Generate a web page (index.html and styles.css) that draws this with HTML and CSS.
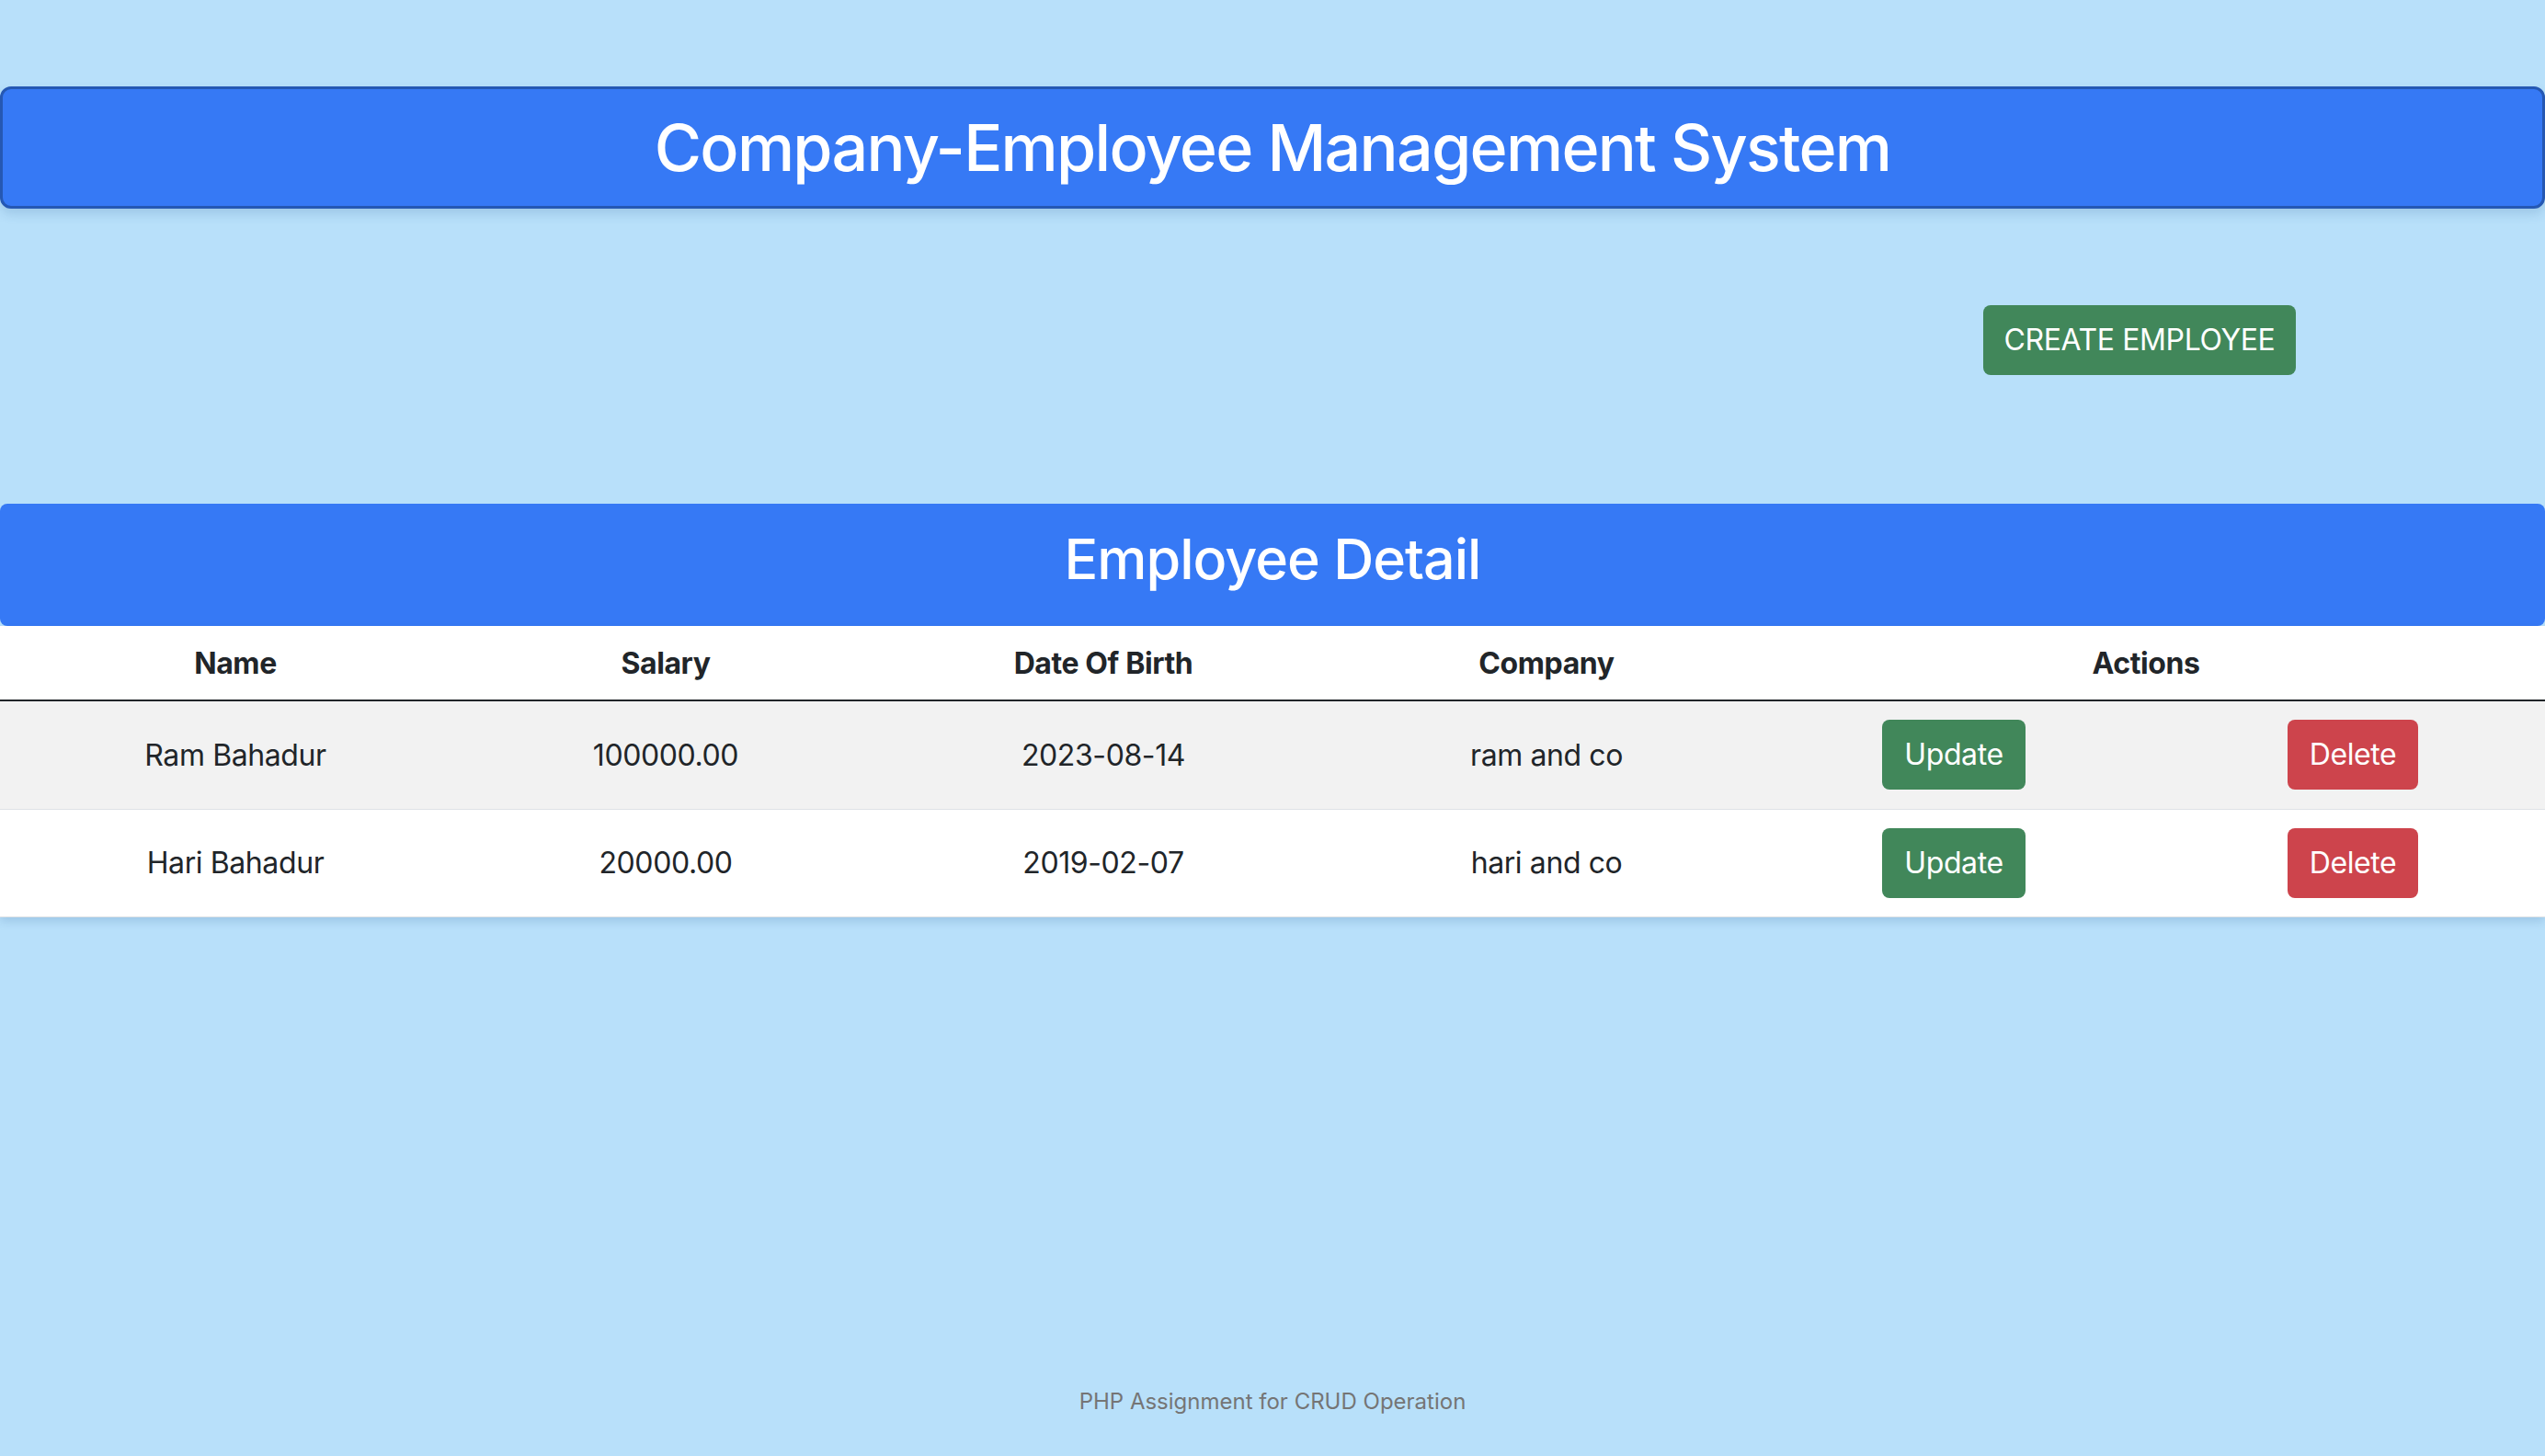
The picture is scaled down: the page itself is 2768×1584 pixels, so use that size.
FILE: index.html
```html
<!DOCTYPE html>
<html lang="en">
<head>
<meta charset="utf-8">
<title>Company-Employee Management System</title>
<link rel="stylesheet" href="styles.css">
</head>
<body>
<div class="page">
  <header class="page-header">
    <h1 class="page-title">Company-Employee Management System</h1>
  </header>

  <div class="toolbar">
    <a class="btn btn-success btn-create" href="#">CREATE EMPLOYEE</a>
  </div>

  <section class="detail">
    <div class="detail-banner">
      <h2 class="detail-title">Employee Detail</h2>
    </div>
    <table class="emp-table">
      <colgroup>
        <col class="c-name">
        <col class="c-salary">
        <col class="c-dob">
        <col class="c-company">
        <col class="c-update">
        <col class="c-delete">
      </colgroup>
      <thead>
        <tr>
          <th>Name</th>
          <th>Salary</th>
          <th>Date Of Birth</th>
          <th>Company</th>
          <th colspan="2">Actions</th>
        </tr>
      </thead>
      <tbody>
        <tr class="row-striped">
          <td>Ram Bahadur</td>
          <td>100000.00</td>
          <td>2023-08-14</td>
          <td>ram and co</td>
          <td><a class="btn btn-success" href="#">Update</a></td>
          <td><a class="btn btn-danger" href="#">Delete</a></td>
        </tr>
        <tr>
          <td>Hari Bahadur</td>
          <td>20000.00</td>
          <td>2019-02-07</td>
          <td>hari and co</td>
          <td><a class="btn btn-success" href="#">Update</a></td>
          <td><a class="btn btn-danger" href="#">Delete</a></td>
        </tr>
      </tbody>
    </table>
  </section>

  <footer class="page-footer">PHP Assignment for CRUD Operation</footer>
</div>
</body>
</html>
```

FILE: styles.css
```css
* { box-sizing: border-box; }

html, body {
  margin: 0;
  padding: 0;
}

body {
  background: #b8e0fa;
  font-family: Inter, "Noto Sans", "Liberation Sans", sans-serif;
  color: #212529;
  font-size: 32px;
}

.page {
  min-height: 1584px;
  display: flex;
  flex-direction: column;
}

.page-header {
  margin-top: 94px;
  height: 133px;
  background: #3679f5;
  border: 3px solid #2558b3;
  border-radius: 12px;
  box-shadow: 0 6px 12px rgba(40, 90, 150, 0.18);
  display: flex;
  align-items: center;
  justify-content: center;
}

.page-title {
  margin: 0;
  color: #ffffff;
  font-size: 70px;
  font-weight: 500;
  line-height: 1;
  letter-spacing: -1.75px;
}

.toolbar {
  display: flex;
  justify-content: flex-end;
  padding-right: 271px;
  margin-top: 105px;
}

.btn {
  display: inline-flex;
  align-items: center;
  justify-content: center;
  height: 76px;
  border-radius: 8px;
  color: #ffffff;
  text-decoration: none;
  font-size: 32px;
  font-weight: 400;
  line-height: 1;
  letter-spacing: -0.4px;
  padding: 0 24px;
}

.btn-success { background: #41875a; }
.btn-danger { background: #cd444c; }

.btn-create {
  width: 340px;
  padding: 0;
}

.detail {
  margin-top: 140px;
}

.detail-banner {
  height: 133px;
  padding-bottom: 12px;
  background: #3679f5;
  border-radius: 8px;
  display: flex;
  align-items: center;
  justify-content: center;
}

.detail-title {
  margin: 0;
  color: #ffffff;
  font-size: 61px;
  font-weight: 500;
  line-height: 1;
  letter-spacing: -1px;
}

.emp-table {
  width: 100%;
  border-collapse: collapse;
  table-layout: fixed;
  background: #ffffff;
  box-shadow: 0 4px 10px rgba(40, 90, 150, 0.2);
}

.c-name { width: 512px; }
.c-salary { width: 424px; }
.c-dob { width: 528px; }
.c-company { width: 436px; }
.c-update { width: 450px; }
.c-delete { width: 418px; }

.emp-table th,
.emp-table td {
  text-align: center;
  vertical-align: middle;
  padding: 0 16px;
  letter-spacing: -0.4px;
}

.emp-table th {
  height: 81px;
  font-weight: 700;
  border-bottom: 2px solid #212529;
}

.emp-table td {
  height: 117px;
  font-weight: 400;
  border-bottom: 1px solid #dee2e6;
}

.emp-table tbody tr:first-child td {
  height: 118px;
}

.row-striped td {
  background: #f2f2f2;
}

.page-footer {
  margin-top: auto;
  padding-bottom: 40px;
  text-align: center;
  font-size: 24px;
  color: #757575;
  line-height: 39px;
}
```
